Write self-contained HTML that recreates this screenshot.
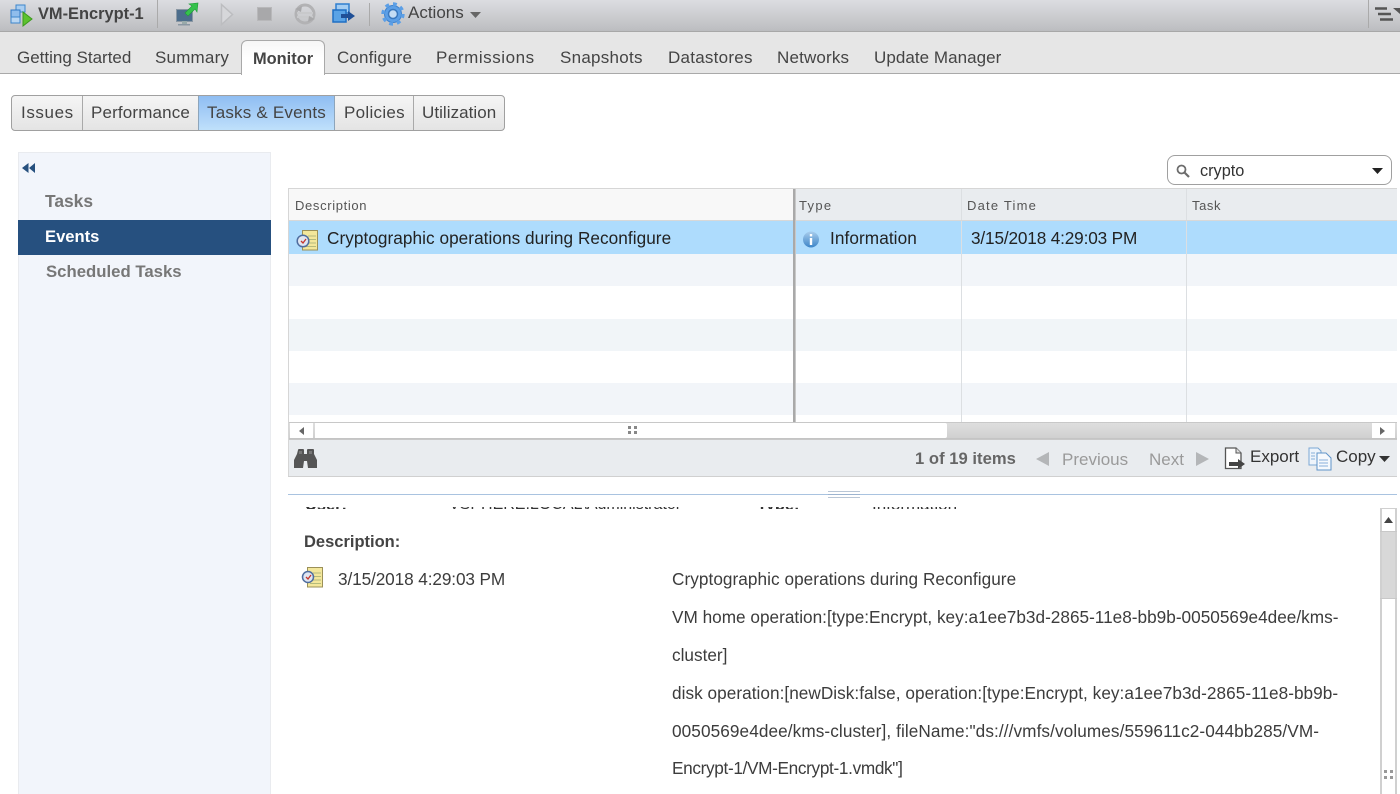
<!DOCTYPE html>
<html><head><meta charset="utf-8"><style>
html,body{margin:0;padding:0;background:#fff}
body{width:1400px;height:794px;overflow:hidden;position:relative;font-family:"Liberation Sans",sans-serif;color:#333}
.a{position:absolute}
.t{position:absolute;white-space:nowrap;font-size:17px;line-height:20px;color:#444}
.b{font-weight:bold;font-size:16.4px}
svg{position:absolute;overflow:visible}
.h{position:absolute;white-space:nowrap;font-size:13px;line-height:16px;color:#555;letter-spacing:1px}
.d{position:absolute;white-space:nowrap;font-size:17.2px;line-height:20px;color:#3c3c3c}
</style></head><body>
<!-- top bar -->
<div class="a" style="left:0;top:0;width:1400px;height:32px;background:linear-gradient(#dcdde1,#bcbdc0);border-bottom:1px solid #a8a8a8;box-sizing:border-box"></div>
<svg style="left:10px;top:2px" width="24" height="24" viewBox="0 0 24 24"><rect x="6" y="3" width="9" height="7" fill="#a9cdf0" stroke="#3d86cc"/><rect x="1" y="8" width="9" height="8" fill="#8fbdec" stroke="#2f78c4"/><rect x="1" y="15" width="9" height="6" fill="#b9d6f2" stroke="#3d86cc"/><path d="M13 10 L22 17 L13 24Z" fill="#5dc22e" stroke="#3a9a1c"/></svg>
<div class="t b" style="left:38px;top:4px;color:#444">VM-Encrypt-1</div>
<div class="a" style="left:157px;top:0;width:1px;height:28px;background:#aaa"></div>
<svg style="left:175px;top:2px" width="24" height="24" viewBox="0 0 24 24"><rect x="1.500" y="7.500" width="16" height="12" fill="#4c6d8c" stroke="#8a97a3"/><rect x="7" y="19" width="5" height="3" fill="#9aa"/><rect x="3" y="22" width="12" height="1.500" fill="#8a97a3"/><path d="M10 11 L17 4 L14 2 L23 1 L22 10 L20 7 L13 14Z" fill="#35c24c" stroke="#1f9a38" stroke-width=".6"/></svg>
<svg style="left:220px;top:3px" width="14" height="23" viewBox="0 0 14 23"><path d="M1.500 1.500 L12.500 11.500 L1.500 21.500Z" fill="#d6d7da" stroke="#bcbdc0" stroke-width="1.500"/></svg>
<div class="a" style="left:257px;top:7px;width:15px;height:14px;background:#a8a8aa;border:1px solid #b8b8ba;box-sizing:border-box"></div>
<svg style="left:293px;top:2px" width="24" height="24" viewBox="0 0 24 24"><circle cx="12" cy="12" r="9" fill="none" stroke="#b2b2b4" stroke-width="3"/><path d="M4 11 H20 M4 15 H20" stroke="#c8c9cb" stroke-width="2"/><path d="M2 7 L9 4 L8 10Z M22 17 L15 20 L16 14Z" fill="#a8a8aa"/></svg>
<svg style="left:332px;top:3px" width="24" height="22" viewBox="0 0 24 22"><rect x="4" y="1" width="13" height="9" fill="#a4cdf2" stroke="#2f7fd0" stroke-width="1.500"/><rect x="1" y="7" width="13" height="12" fill="#5aa3e6" stroke="#1f6fc4" stroke-width="1.500"/><path d="M9 11 H16 V8 L23 13 L16 18 V15 H9Z" fill="#1f4f96"/></svg>
<div class="a" style="left:369px;top:3px;width:1px;height:23px;background:#aaa"></div>
<svg style="left:381px;top:2px" width="24" height="24" viewBox="0 0 24 24"><circle cx="12" cy="12" r="8.500" fill="#5c9fe6" stroke="#3f82cc"/><circle cx="12" cy="12" r="10" fill="none" stroke="#5c9fe6" stroke-width="3.400" stroke-dasharray="3.800 4"/><circle cx="12" cy="12" r="4.500" fill="#c4dcf4" stroke="#3a78be" stroke-width="1.500"/></svg>
<div class="t" style="left:408px;top:3px">Actions</div>
<svg style="left:470px;top:12px" width="11" height="6"><path d="M0 0H11L5.500 6Z" fill="#666"/></svg>
<div class="a" style="left:1368px;top:0;width:1px;height:28px;background:#aaa"></div>
<svg style="left:1374px;top:7px" width="26" height="14"><path d="M1 1.500H13M4 7H17M6 12.500H19" stroke="#555" stroke-width="2.400"/><path d="M19 1H26V7Z" fill="#555"/></svg>

<!-- tabs -->
<div class="a" style="left:0;top:32px;width:1400px;height:42px;background:#e6e6e6;border-bottom:1px solid #a9a9a9;box-sizing:border-box"></div>
<div class="a" style="left:241px;top:40px;width:84px;height:35px;background:linear-gradient(#f6f6f6,#fff 50%);border:1px solid #a9a9a9;border-bottom:none;border-radius:6px 6px 0 0;box-sizing:border-box"></div>
<div class="t" style="left:17px;top:48px">Getting Started</div>
<div class="t" style="left:155px;top:48px;letter-spacing:.2px">Summary</div>
<div class="t b" style="left:253px;top:49px">Monitor</div>
<div class="t" style="left:337px;top:48px;letter-spacing:.15px">Configure</div>
<div class="t" style="left:436px;top:48px;letter-spacing:.55px">Permissions</div>
<div class="t" style="left:560px;top:48px;letter-spacing:.27px">Snapshots</div>
<div class="t" style="left:668px;top:48px;letter-spacing:.25px">Datastores</div>
<div class="t" style="left:777px;top:48px;letter-spacing:.17px">Networks</div>
<div class="t" style="left:874px;top:48px;letter-spacing:.05px">Update Manager</div>

<!-- segmented -->
<div class="a" style="left:11px;top:95px;width:494px;height:36px;border:1px solid #a0a0a0;border-radius:4px;box-sizing:border-box;background:linear-gradient(#f5f5f5,#e4e4e4)"></div>
<div class="a" style="left:198px;top:96px;width:137px;height:34px;background:linear-gradient(#8fbdf2,#bfe0fb);border-left:1px solid #8da5bb;border-right:1px solid #8da5bb;box-sizing:border-box"></div>
<div class="a" style="left:82px;top:96px;width:1px;height:34px;background:#a9a9a9"></div>
<div class="a" style="left:413px;top:96px;width:1px;height:34px;background:#a9a9a9"></div>
<div class="t" style="left:21px;top:103px;letter-spacing:.6px">Issues</div>
<div class="t" style="left:91px;top:103px;letter-spacing:.15px">Performance</div>
<div class="t" style="left:207px;top:103px;letter-spacing:.2px">Tasks &amp; Events</div>
<div class="t" style="left:344px;top:103px;letter-spacing:.3px">Policies</div>
<div class="t" style="left:422px;top:103px;letter-spacing:.05px">Utilization</div>

<!-- sidebar -->
<div class="a" style="left:18px;top:152px;width:253px;height:642px;background:#f2f5fb;border:1px solid #e9ebef;border-bottom:none;box-sizing:border-box"></div>
<svg style="left:22px;top:163px" width="14" height="10"><path d="M6.500 0V10L0 5ZM13 0V10L7 5Z" fill="#26507e"/></svg>
<div class="t b" style="left:45px;top:191px;color:#777;font-size:17.400px">Tasks</div>
<div class="a" style="left:18px;top:220px;width:253px;height:35px;background:#26507f"></div>
<div class="t b" style="left:45px;top:227px;color:#fff;font-size:16.600px">Events</div>
<div class="t b" style="left:46px;top:262px;color:#777;font-size:16.750px">Scheduled Tasks</div>

<!-- search -->
<div class="a" style="left:1167px;top:155px;width:225px;height:30px;border:1px solid #a0a0a0;border-radius:8px;box-sizing:border-box;background:#fff"></div>
<svg style="left:1176px;top:164px" width="14" height="14"><circle cx="5.500" cy="5.500" r="4" fill="none" stroke="#6d6d6d" stroke-width="1.800"/><path d="M8.500 8.500L13 13" stroke="#6d6d6d" stroke-width="2.200"/></svg>
<div class="t" style="left:1200px;top:161px;color:#333;font-size:16.300px">crypto</div>
<svg style="left:1372px;top:168px" width="11" height="6"><path d="M0 0H11L5.500 6Z" fill="#222"/></svg>

<!-- table -->
<div class="a" style="left:288px;top:188px;width:1109px;height:289px;border:1px solid #d6d6d6;border-right:none;box-sizing:border-box;background:#fff"></div>
<div class="a" style="left:289px;top:189px;width:505px;height:32px;background:#f8f8f8"></div>
<div class="a" style="left:794px;top:189px;width:603px;height:32px;background:#e9ecef"></div>
<div class="a" style="left:289px;top:221px;width:1108px;height:33px;background:#aedcfd"></div>
<div class="a" style="left:289px;top:254px;width:1108px;height:32px;background:#f2f5f9"></div>
<div class="a" style="left:289px;top:319px;width:1108px;height:32px;background:#f1f5f8"></div>
<div class="a" style="left:289px;top:383px;width:1108px;height:32px;background:#f2f5f9"></div>
<div class="a" style="left:793px;top:189px;width:2px;height:234px;background:#a9a9a9"></div>
<div class="a" style="left:795px;top:189px;width:1px;height:234px;background:#c8c8c8"></div>
<div class="a" style="left:961px;top:189px;width:1px;height:234px;background:#dcdfe2"></div>
<div class="a" style="left:1186px;top:189px;width:1px;height:234px;background:#dcdfe2"></div>
<div class="a" style="left:289px;top:220px;width:504px;height:1px;background:#d8d8d8"></div>
<div class="a" style="left:796px;top:220px;width:601px;height:1px;background:#d8d8d8"></div>
<div class="h" style="left:295px;top:198px;letter-spacing:.65px">Description</div>
<div class="h" style="left:799px;top:198px;letter-spacing:1.300px">Type</div>
<div class="h" style="left:967px;top:198px;letter-spacing:1.200px">Date Time</div>
<div class="h" style="left:1192px;top:198px;letter-spacing:.6px">Task</div>
<svg style="left:296px;top:229px" width="24" height="23" viewBox="0 0 24 23"><rect x="6.500" y="1.500" width="15" height="19.500" fill="#f3e79b" stroke="#9b9058"/><path d="M12 7H20M12 10.500H20M12 14H20M9 17.500H20" stroke="#b4ba7c"/><circle cx="7" cy="12" r="5.800" fill="#dfe6f2" stroke="#4f6d9f" stroke-width="1.500"/><path d="M5 12L7 14L10 10" stroke="#c6362c" stroke-width="1.300" fill="none"/></svg>
<div class="d" style="left:327px;top:228px;color:#222;letter-spacing:.05px">Cryptographic operations during Reconfigure</div>
<svg style="left:803px;top:231px" width="16" height="17"><defs><linearGradient id="g" x1="0" y1="0" x2="0" y2="1"><stop offset="0" stop-color="#a8cdec"/><stop offset="1" stop-color="#3d85c8"/></linearGradient></defs><circle cx="8" cy="8.500" r="8" fill="url(#g)"/><rect x="6.800" y="3" width="2.400" height="2.400" fill="#fff"/><rect x="6.800" y="7" width="2.400" height="7" fill="#fff"/></svg>
<div class="d" style="left:830px;top:228px;color:#222;letter-spacing:.08px">Information</div>
<div class="d" style="left:971px;top:228px;color:#222;letter-spacing:-.15px">3/15/2018 4:29:03 PM</div>

<!-- h scrollbar -->
<div class="a" style="left:289px;top:422px;width:1108px;height:17px;background:linear-gradient(#dedede,#d0d0d0);border-top:1px solid #c8c8c8;border-bottom:1px solid #c4c4c4;box-sizing:border-box"></div>
<div class="a" style="left:290px;top:423px;width:23px;height:15px;background:#fff"></div>
<div class="a" style="left:315px;top:423px;width:632px;height:15px;background:#fff;border-radius:0 2px 2px 0"></div>
<div class="a" style="left:1372px;top:423px;width:23px;height:15px;background:#fff"></div>
<svg style="left:299px;top:427px" width="6" height="8"><path d="M5 0V8L0 4Z" fill="#666"/></svg>
<svg style="left:1380px;top:427px" width="6" height="8"><path d="M0 0V8L5 4Z" fill="#666"/></svg>
<svg style="left:628px;top:426px" width="10" height="9"><path d="M0 0h3v3h-3zM6 0h3v3h-3zM0 5h3v3h-3zM6 5h3v3h-3z" fill="#888"/></svg>

<!-- footer -->
<div class="a" style="left:289px;top:439px;width:1108px;height:37px;background:#e9ecef;border-top:1px solid #c8c8c8;box-sizing:border-box"></div>
<div class="a" style="left:288px;top:476px;width:1109px;height:1px;background:#d0d0d0"></div>
<svg style="left:294px;top:448px" width="24" height="20" viewBox="0 0 24 20"><path d="M4 2Q4 1 5 1H9Q10 1 10 2V6H13V2Q13 1 14 1H19Q20 1 20 2V6L23 12V20H14L13 13H10L9 20H0V12L3 6Z" fill="#555"/><path d="M5 3H8V6H5ZM15 3H18V6H15Z" fill="#777"/></svg>
<div class="t b" style="left:915px;top:449px;color:#666;font-size:16.600px;letter-spacing:.03px">1 of 19 items</div>
<svg style="left:1036px;top:452px" width="14" height="14"><path d="M13 0V14L0 7Z" fill="#b4b6b8"/></svg>
<div class="t" style="left:1062px;top:450px;color:#9a9a9a">Previous</div>
<div class="t" style="left:1149px;top:450px;color:#9a9a9a">Next</div>
<svg style="left:1195px;top:452px" width="14" height="14"><path d="M1 0V14L14 7Z" fill="#b4b6b8"/></svg>
<svg style="left:1224px;top:447px" width="22" height="23" viewBox="0 0 22 23"><path d="M1.500 1H12L17 6V21.500H1.500Z" fill="#fff" stroke="#555" stroke-width="1.300"/><path d="M12 1V6H17" fill="#ddd" stroke="#555"/><path d="M5 15H14V12L21 17L14 22V19H5Z" fill="#444"/></svg>
<div class="t" style="left:1250px;top:447px;color:#333">Export</div>
<svg style="left:1308px;top:447px" width="24" height="24" viewBox="0 0 24 24"><path d="M1 1H10L13 4V18H1Z" fill="#eef4fb" stroke="#7ba7d4"/><path d="M9 6H18L23 11V23H9Z" fill="#f6f9fd" stroke="#5f93c9"/><path d="M11 13H20M11 16H20M11 19H20M3 6H7M3 9H7M3 12H7" stroke="#88b0da"/></svg>
<div class="t" style="left:1336px;top:447px;color:#333">Copy</div>
<svg style="left:1379px;top:456px" width="11" height="6"><path d="M0 0H11L5.500 6Z" fill="#333"/></svg>

<!-- splitter -->
<div class="a" style="left:288px;top:494px;width:1109px;height:1px;background:#a9c3e0"></div>
<div class="a" style="left:828px;top:491px;width:32px;height:1px;background:#b9c6d6"></div>
<div class="a" style="left:828px;top:494px;width:32px;height:1px;background:#9db4d0"></div>
<div class="a" style="left:828px;top:497px;width:32px;height:1px;background:#b9c6d6"></div>

<!-- details -->
<div style="position:absolute;left:289px;top:507px;width:1090px;height:2px;overflow:hidden"><div class="t b" style="left:16px;top:-12px;color:#333">User:</div><div class="t" style="left:160px;top:-12px;color:#333;font-size:16px">VSPHERE.LOCAL\Administrator</div><div class="t b" style="left:468px;top:-12px;color:#333">Type:</div><div class="t" style="left:583px;top:-12px;color:#333">Information</div></div>
<div class="t b" style="left:304px;top:532px;color:#444;font-size:16.500px">Description:</div>
<svg style="left:301px;top:566px" width="24" height="23" viewBox="0 0 24 23"><rect x="6.500" y="1.500" width="15" height="19.500" fill="#f3e79b" stroke="#9b9058"/><path d="M12 7H20M12 10.500H20M12 14H20M9 17.500H20" stroke="#b4ba7c"/><circle cx="7" cy="11" r="5.500" fill="#dfe6f2" stroke="#4f6d9f" stroke-width="1.500"/><path d="M5 11L7 13L10 9" stroke="#c6362c" stroke-width="1.300" fill="none"/></svg>
<div class="d" style="left:338px;top:569px;letter-spacing:-.1px">3/15/2018 4:29:03 PM</div>
<div class="d" style="left:672px;top:569px;letter-spacing:.05px">Cryptographic operations during Reconfigure</div>
<div class="d" style="left:672px;top:607px;letter-spacing:.01px">VM home operation:[type:Encrypt, key:a1ee7b3d-2865-11e8-bb9b-0050569e4dee/kms-</div>
<div class="d" style="left:672px;top:645px">cluster]</div>
<div class="d" style="left:672px;top:683px;letter-spacing:.04px">disk operation:[newDisk:false, operation:[type:Encrypt, key:a1ee7b3d-2865-11e8-bb9b-</div>
<div class="d" style="left:672px;top:721px;letter-spacing:.09px">0050569e4dee/kms-cluster], fileName:"ds:///vmfs/volumes/559611c2-044bb285/VM-</div>
<div class="d" style="left:672px;top:758px;letter-spacing:-.33px">Encrypt-1/VM-Encrypt-1.vmdk"]</div>

<!-- v scrollbar -->
<div class="a" style="left:1380px;top:508px;width:17px;height:286px;background:#fff;border-left:2px solid #d0d0d0;border-right:2px solid #d0d0d0;box-sizing:border-box"></div>
<div class="a" style="left:1380px;top:508px;width:17px;height:1px;background:#d0d0d0"></div>
<div class="a" style="left:1382px;top:532px;width:13px;height:66px;background:#d8d8d8"></div>
<div class="a" style="left:1380px;top:531px;width:17px;height:1px;background:#c8c8c8"></div>
<div class="a" style="left:1380px;top:598px;width:17px;height:1px;background:#c8c8c8"></div>
<svg style="left:1384px;top:517px" width="9" height="6"><path d="M0 6H9L4.500 0Z" fill="#444"/></svg>
<svg style="left:1384px;top:770px" width="9" height="9"><path d="M0 0h3v3h-3zM6 0h3v3h-3zM0 6h3v3h-3zM6 6h3v3h-3z" fill="#999"/></svg>
</body></html>
